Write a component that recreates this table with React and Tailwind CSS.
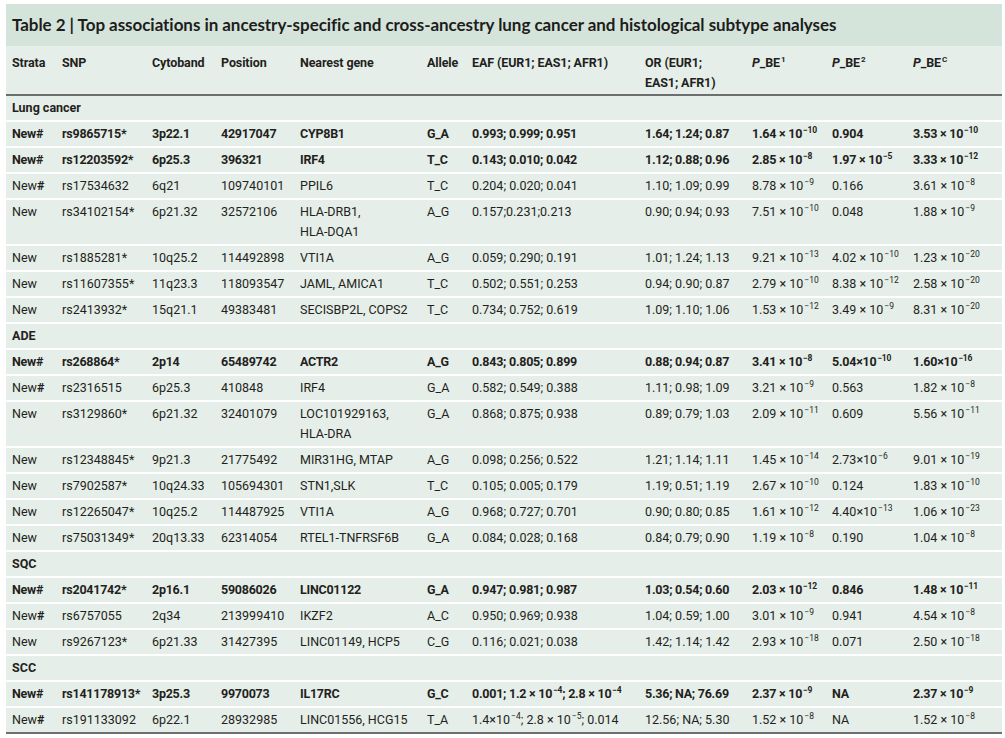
import React from "react";

const COLS =
  "grid grid-cols-[56px_90px_69px_79px_127px_45px_173px_107px_80px_81px_89px]";

// scientific notation, e.g. 1.64 × 10⁻¹⁰
function Sci({ m, e, tight }) {
  return (
    <span className="whitespace-nowrap">
      {m}
      {tight ? "×" : " × "}10
      <sup className="text-[8.5px] -top-[5px] ml-[1px]">−{e}</sup>
    </span>
  );
}

const s = (m, e) => <Sci m={m} e={e} />;
const t = (m, e) => <Sci m={m} e={e} tight />;
const NH = (
  <>
    New<span className="font-bold">#</span>
  </>
);

const SECTIONS = [
  {
    name: "Lung cancer",
    rows: [
      { bold: true, c: ["New#", "rs9865715*", "3p22.1", "42917047", "CYP8B1", "G_A", "0.993; 0.999; 0.951", "1.64; 1.24; 0.87", s("1.64", "10"), "0.904", s("3.53", "10")] },
      { bold: true, c: ["New#", "rs12203592*", "6p25.3", "396321", "IRF4", "T_C", "0.143; 0.010; 0.042", "1.12; 0.88; 0.96", s("2.85", "8"), s("1.97", "5"), s("3.33", "12")] },
      { c: [NH, "rs17534632", "6q21", "109740101", "PPIL6", "T_C", "0.204; 0.020; 0.041", "1.10; 1.09; 0.99", s("8.78", "9"), "0.166", s("3.61", "8")] },
      { c: ["New", "rs34102154*", "6p21.32", "32572106", <>HLA-DRB1,<br />HLA-DQA1</>, "A_G", "0.157;0.231;0.213", "0.90; 0.94; 0.93", s("7.51", "10"), "0.048", s("1.88", "9")] },
      { c: ["New", "rs1885281*", "10q25.2", "114492898", "VTI1A", "A_G", "0.059; 0.290; 0.191", "1.01; 1.24; 1.13", s("9.21", "13"), s("4.02", "10"), s("1.23", "20")] },
      { c: ["New", "rs11607355*", "11q23.3", "118093547", "JAML, AMICA1", "T_C", "0.502; 0.551; 0.253", "0.94; 0.90; 0.87", s("2.79", "10"), s("8.38", "12"), s("2.58", "20")] },
      { c: ["New", "rs2413932*", "15q21.1", "49383481", "SECISBP2L, COPS2", "T_C", "0.734; 0.752; 0.619", "1.09; 1.10; 1.06", s("1.53", "12"), s("3.49", "9"), s("8.31", "20")] },
    ],
  },
  {
    name: "ADE",
    rows: [
      { bold: true, c: ["New#", "rs268864*", "2p14", "65489742", "ACTR2", "A_G", "0.843; 0.805; 0.899", "0.88; 0.94; 0.87", s("3.41", "8"), t("5.04", "10"), t("1.60", "16")] },
      { c: [NH, "rs2316515", "6p25.3", "410848", "IRF4", "G_A", "0.582; 0.549; 0.388", "1.11; 0.98; 1.09", s("3.21", "9"), "0.563", s("1.82", "8")] },
      { c: ["New", "rs3129860*", "6p21.32", "32401079", <>LOC101929163,<br />HLA-DRA</>, "G_A", "0.868; 0.875; 0.938", "0.89; 0.79; 1.03", s("2.09", "11"), "0.609", s("5.56", "11")] },
      { c: ["New", "rs12348845*", "9p21.3", "21775492", "MIR31HG, MTAP", "A_G", "0.098; 0.256; 0.522", "1.21; 1.14; 1.11", s("1.45", "14"), t("2.73", "6"), s("9.01", "19")] },
      { c: ["New", "rs7902587*", "10q24.33", "105694301", "STN1,SLK", "T_C", "0.105; 0.005; 0.179", "1.19; 0.51; 1.19", s("2.67", "10"), "0.124", s("1.83", "10")] },
      { c: ["New", "rs12265047*", "10q25.2", "114487925", "VTI1A", "A_G", "0.968; 0.727; 0.701", "0.90; 0.80; 0.85", s("1.61", "12"), t("4.40", "13"), s("1.06", "23")] },
      { c: ["New", "rs75031349*", "20q13.33", "62314054", "RTEL1-TNFRSF6B", "G_A", "0.084; 0.028; 0.168", "0.84; 0.79; 0.90", s("1.19", "8"), "0.190", s("1.04", "8")] },
    ],
  },
  {
    name: "SQC",
    rows: [
      { bold: true, c: ["New#", "rs2041742*", "2p16.1", "59086026", "LINC01122", "G_A", "0.947; 0.981; 0.987", "1.03; 0.54; 0.60", s("2.03", "12"), "0.846", s("1.48", "11")] },
      { c: [NH, "rs6757055", "2q34", "213999410", "IKZF2", "A_C", "0.950; 0.969; 0.938", "1.04; 0.59; 1.00", s("3.01", "9"), "0.941", s("4.54", "8")] },
      { c: ["New", "rs9267123*", "6p21.33", "31427395", "LINC01149, HCP5", "C_G", "0.116; 0.021; 0.038", "1.42; 1.14; 1.42", s("2.93", "18"), "0.071", s("2.50", "18")] },
    ],
  },
  {
    name: "SCC",
    rows: [
      { bold: true, c: ["New#", "rs141178913*", "3p25.3", "9970073", "IL17RC", "G_C", <>0.001; {s("1.2", "4")}; {s("2.8", "4")}</>, "5.36; NA; 76.69", s("2.37", "9"), "NA", s("2.37", "9")] },
      { c: [NH, "rs191133092", "6p22.1", "28932985", "LINC01556, HCG15", "T_A", <>{t("1.4", "4")}; {s("2.8", "5")}; 0.014</>, "12.56; NA; 5.30", s("1.52", "8"), "NA", s("1.52", "8")] },
    ],
  },
];

function PBE({ sup }) {
  return (
    <span>
      <i>P</i>_BE<sup className="text-[8px] -top-[5px] ml-[1px]">{sup}</sup>
    </span>
  );
}

const HEADERS = [
  "Strata",
  "SNP",
  "Cytoband",
  "Position",
  "Nearest gene",
  "Allele",
  "EAF (EUR1; EAS1; AFR1)",
  <>OR (EUR1;<br />EAS1; AFR1)</>,
  <PBE sup="1" />,
  <PBE sup="2" />,
  <PBE sup="C" />,
];

export default function App() {
  return (
    <div className="bg-white w-[1005px] h-[738px] pt-[4px] pl-[6px] font-['Roboto',sans-serif] text-[#231f20]">
      <div className="w-[996px] bg-[#e6eee9]">
        <div className="h-[42px] bg-[#d5e4db] pl-[6px] flex items-center font-['Lato',sans-serif] font-bold text-[17px] tracking-[-0.05px] text-[#1d1d1b]">
          Table 2 | Top associations in ancestry-specific and cross-ancestry lung cancer and histological subtype analyses
        </div>

        <div className={`${COLS} h-[50px] pt-[7px] border-b-2 border-[#6d6e70] text-[12.5px] leading-[20px] font-bold tracking-[-0.1px]`}>
          {HEADERS.map((h, i) => (
            <div key={i} className={i === 0 ? "pl-[6px]" : ""}>
              {h}
            </div>
          ))}
        </div>

        <div className="border-b-2 border-[#6d6e70]">
          {SECTIONS.map((sec, si) => (
            <div key={sec.name}>
              <div className={`h-[24px] pl-[6px] flex items-center text-[12.5px] font-bold ${si > 0 ? "border-t-2 border-white h-[26px]" : ""}`}>
                {sec.name}
              </div>
              {sec.rows.map((r, ri) => (
                <div
                  key={ri}
                  className={`${COLS} border-t-2 border-white py-[2px] text-[12.5px] leading-[20px] ${r.bold ? "font-bold tracking-[-0.25px]" : ""}`}
                >
                  {r.c.map((cell, ci) => (
                    <div key={ci} className={`whitespace-nowrap ${ci === 0 ? "pl-[6px]" : ""}`}>
                      {cell}
                    </div>
                  ))}
                </div>
              ))}
            </div>
          ))}
        </div>
      </div>
    </div>
  );
}
